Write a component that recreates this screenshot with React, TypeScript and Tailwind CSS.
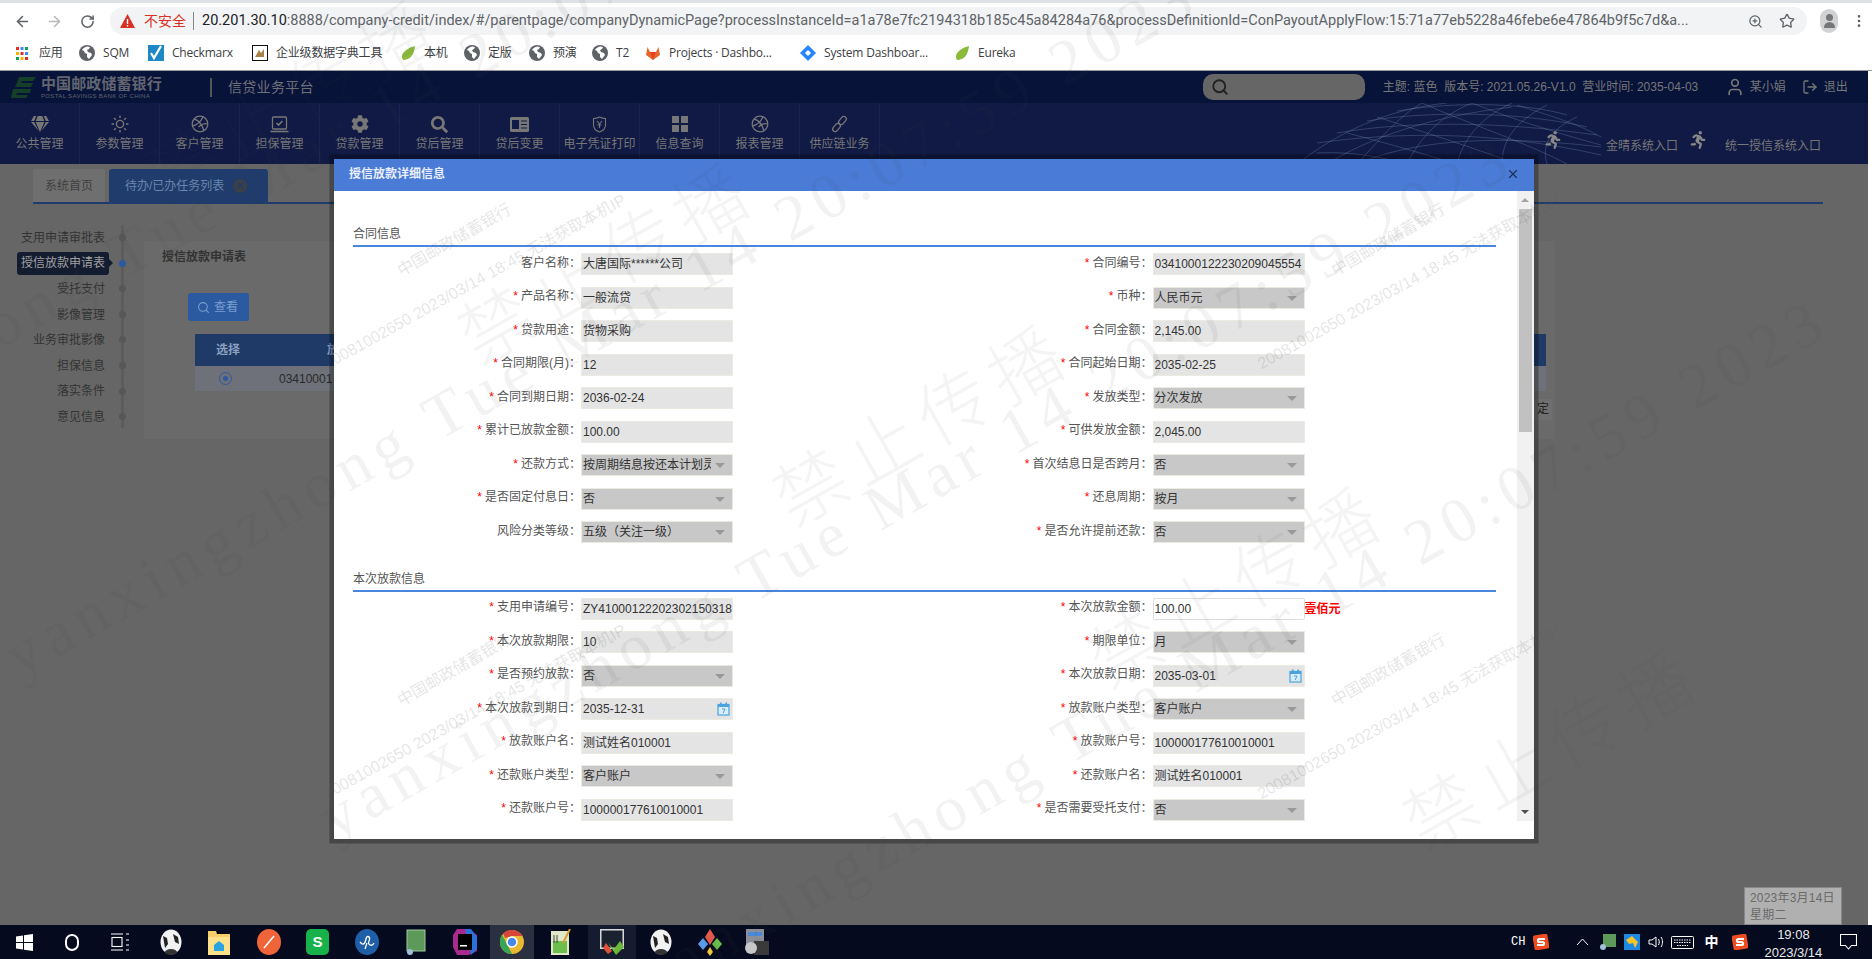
import React from "react";
import { ArrowLeft, ArrowRight, RotateCw, ZoomIn, Star, EllipsisVertical, Search, X, User, LogOut } from "lucide-react";
import { FaRunning, FaCog, FaSearch, FaGem } from "react-icons/fa";

type F = { l: string; v: string; s?: boolean; k?: "sel" | "date" | "edit"; t?: string };

const sec1L: F[] = [
  { l: "客户名称", v: "大唐国际******公司" },
  { l: "产品名称", v: "一般流贷", s: true },
  { l: "贷款用途", v: "货物采购", s: true },
  { l: "合同期限(月)", v: "12", s: true },
  { l: "合同到期日期", v: "2036-02-24", s: true },
  { l: "累计已放款金额", v: "100.00", s: true },
  { l: "还款方式", v: "按周期结息按还本计划灵活还款", s: true, k: "sel" },
  { l: "是否固定付息日", v: "否", s: true, k: "sel" },
  { l: "风险分类等级", v: "五级（关注一级）", k: "sel" },
];
const sec1R: F[] = [
  { l: "合同编号", v: "0341000122230209045554", s: true },
  { l: "币种", v: "人民币元", s: true, k: "sel" },
  { l: "合同金额", v: "2,145.00", s: true },
  { l: "合同起始日期", v: "2035-02-25", s: true },
  { l: "发放类型", v: "分次发放", s: true, k: "sel" },
  { l: "可供发放金额", v: "2,045.00", s: true },
  { l: "首次结息日是否跨月", v: "否", s: true, k: "sel" },
  { l: "还息周期", v: "按月", s: true, k: "sel" },
  { l: "是否允许提前还款", v: "否", s: true, k: "sel" },
];
const sec2L: F[] = [
  { l: "支用申请编号", v: "ZY41000122202302150318", s: true },
  { l: "本次放款期限", v: "10", s: true },
  { l: "是否预约放款", v: "否", s: true, k: "sel" },
  { l: "本次放款到期日", v: "2035-12-31", s: true, k: "date" },
  { l: "放款账户名", v: "测试姓名010001", s: true },
  { l: "还款账户类型", v: "客户账户", s: true, k: "sel" },
  { l: "还款账户号", v: "100000177610010001", s: true },
];
const sec2R: F[] = [
  { l: "本次放款金额", v: "100.00", s: true, k: "edit", t: "壹佰元" },
  { l: "期限单位", v: "月", s: true, k: "sel" },
  { l: "本次放款日期", v: "2035-03-01", s: true, k: "date" },
  { l: "放款账户类型", v: "客户账户", s: true, k: "sel" },
  { l: "放款账户号", v: "100000177610010001", s: true },
  { l: "还款账户名", v: "测试姓名010001", s: true },
  { l: "是否需要受托支付", v: "否", s: true, k: "sel" },
];

const Cal = () => (
  <svg width="13" height="14" viewBox="0 0 13 14" className="absolute right-[2px] top-[3px]">
    <rect x="1" y="2.5" width="11" height="10.5" fill="#d9ecfa" stroke="#4aa3e0" strokeWidth="1.2" />
    <rect x="1" y="2" width="11" height="3" fill="#4aa3e0" />
    <rect x="3" y="0.5" width="1.6" height="3" fill="#4aa3e0" />
    <rect x="8.4" y="0.5" width="1.6" height="3" fill="#4aa3e0" />
    <path d="M5 7h3L6.2 11" fill="none" stroke="#4aa3e0" strokeWidth="1" />
  </svg>
);

function Field({ f }: { f: F }) {
  const box =
    f.k === "sel"
      ? "bg-[#c8c8c8] border-[#ebebe4]"
      : f.k === "edit"
      ? "bg-white border-[#dddddd] rounded-[2px]"
      : "bg-[#e4e4e4] border-[#ebebe4]";
  return (
    <div className="flex items-center h-[22px] mb-[11.5px]">
      <div className="w-[228px] text-right text-[12px] leading-[18px] -mt-[3px] text-[#555] whitespace-nowrap">
        {f.s && <span className="text-[#ff0000] mr-[3px]">*</span>}
        {f.l}：
      </div>
      <div className={`relative w-[152px] h-[22px] border ${box} shrink-0 text-[12px] leading-[21px] pl-[1px] text-[#333] whitespace-nowrap overflow-hidden`}>
        <div className={f.k === "sel" ? "w-[128px] overflow-hidden" : "overflow-hidden"}>{f.v}</div>
        {f.k === "sel" && <div className="absolute right-[7px] top-[8px] w-0 h-0 border-l-[5px] border-r-[5px] border-t-[5px] border-l-transparent border-r-transparent border-t-[#999]" />}
        {f.k === "date" && <Cal />}
      </div>
      {f.t && <div className="text-[12px] font-bold text-[#ff0000] whitespace-nowrap">{f.t}</div>}
    </div>
  );
}

function Section({ title, left, right, cls }: { title: string; left: F[]; right: F[]; cls: string }) {
  return (
    <div className={cls}>
      <div className="h-[20px] text-[12px] leading-[18px] text-[#555] border-b-2 border-[#4a86e0] w-[1143px] box-content">{title}</div>
      <div className="grid grid-cols-2 w-[1143px] pt-[6px]">
        <div>{left.map((f) => <Field key={f.l} f={f} />)}</div>
        <div>{right.map((f) => <Field key={f.l} f={f} />)}</div>
      </div>
    </div>
  );
}

const I = "#777777";
const Ball = () => (
  <svg width="18" height="18" viewBox="0 0 18 18" fill="none" stroke={I} strokeWidth="1.3">
    <circle cx="9" cy="9" r="7.8" />
    <path d="M3 4c4 1 8 5 10 12M12 2C10 6 6 10 1.5 11M16.5 9c-3-1-6 0-9 3" />
  </svg>
);
const navItems: { t: string; i: React.ReactNode }[] = [
  { t: "公共管理", i: <FaGem size={18} color={I} /> },
  {
    t: "参数管理",
    i: (
      <svg width="18" height="18" viewBox="0 0 18 18" fill="none" stroke={I} strokeWidth="1.4">
        <circle cx="9" cy="9" r="3.6" />
        <path d="M9 .5v2.6M9 14.9v2.6M.5 9h2.6M14.9 9h2.6M3 3l1.8 1.8M13.2 13.2L15 15M3 15l1.8-1.8M13.2 4.8L15 3" />
      </svg>
    ),
  },
  { t: "客户管理", i: <Ball /> },
  {
    t: "担保管理",
    i: (
      <svg width="19" height="17" viewBox="0 0 19 17" fill="none" stroke={I} strokeWidth="1.3">
        <rect x="2.5" y="1" width="14" height="12" rx="1" />
        <path d="M6.5 7l2 2 4-4" strokeWidth="1.6" />
        <path d="M.5 15.5h18" strokeWidth="1.6" />
      </svg>
    ),
  },
  { t: "贷款管理", i: <FaCog size={18} color={I} /> },
  { t: "贷后管理", i: <FaSearch size={17} color={I} /> },
  {
    t: "贷后变更",
    i: (
      <svg width="19" height="15" viewBox="0 0 19 15">
        <rect width="19" height="15" rx="1.5" fill={I} />
        <rect x="2" y="3" width="7" height="9" fill="#101a44" />
        <path d="M11 4h6M11 7.5h6M11 11h6" stroke="#101a44" strokeWidth="1.2" />
      </svg>
    ),
  },
  {
    t: "电子凭证打印",
    i: (
      <svg width="15" height="17" viewBox="0 0 15 17" fill="none" stroke={I} strokeWidth="1.1">
        <path d="M7.500 1c2 1 4 1.500 6 1.500V9c0 3.500-3 6-6 7-3-1-6-3.500-6-7V2.500c2 0 4-.5 6-1.500z" />
        <path d="M5 5l2.500 3L10 5M7.500 8v4M5.500 9h4" />
      </svg>
    ),
  },
  {
    t: "信息查询",
    i: (
      <svg width="16" height="16" viewBox="0 0 16 16" fill={I}>
        <rect width="7" height="7" />
        <rect x="9" width="7" height="7" />
        <rect y="9" width="7" height="7" />
        <rect x="9" y="9" width="7" height="7" />
      </svg>
    ),
  },
  { t: "报表管理", i: <Ball /> },
  {
    t: "供应链业务",
    i: (
      <svg width="17" height="18" viewBox="0 0 17 18" fill="none" stroke={I} strokeWidth="1.3">
        <rect x="9" y="1" width="5" height="9" rx="2.500" transform="rotate(40 11.500 5.500)" />
        <rect x="3" y="8" width="5" height="9" rx="2.500" transform="rotate(40 5.500 12.500)" />
      </svg>
    ),
  },
];

const steps = ["支用申请审批表", "授信放款申请表", "受托支付", "影像管理", "业务审批影像", "担保信息", "落实条件", "意见信息"];

const mesh = [
  "M0 61C40 30 90 6 150 0", "M30 61C70 36 130 14 215 4", "M60 61C100 44 170 28 304 44", "M20 40C90 30 190 26 304 52",
  "M40 30C110 18 200 18 300 32", "M70 18C130 8 220 8 290 24", "M100 8C160 -2 230 0 270 12", "M60 61C80 40 100 14 125 0",
  "M110 61C120 40 140 14 175 0", "M160 61C165 40 180 16 215 0", "M205 61C205 40 215 20 250 2", "M250 61C245 44 250 28 280 14",
  "M125 0C170 20 230 40 270 61", "M175 0C215 16 260 30 304 42", "M80 14C130 30 180 46 220 61", "M50 30C90 40 130 52 160 61",
  "M220 2C250 12 280 20 304 34", "M20 50C60 48 90 56 110 61",
];

const big = [
  [-290, 526], [25, 688], [340, 850], [655, 1012],
];
const cjk = [
  [-150, 46], [165, 208], [480, 370], [795, 532], [1110, 694], [1425, 856],
];
const small = [
  [403, 279, 329, 372], [1337, 279, 1263, 372], [403, 709, 329, 802], [1337, 709, 1263, 802],
];

const Ball2 = () => (
  <svg width="16" height="16" viewBox="0 0 16 16" className="mr-[8px]">
    <circle cx="8" cy="8" r="8" fill="#5f6368" />
    <path d="M8 1.500C6 2 4 3 3 5l2 1 1 2 2 1v3l2 2 3-4-1-2-3-1-1-2 2-1 1-2z" fill="#fff" />
  </svg>
);
const Panda = () => (
  <svg width="22" height="26" viewBox="0 0 22 26">
    <ellipse cx="11" cy="13" rx="10.500" ry="12.500" fill="#f2f2f2" />
    <path d="M3 7l4 2 1 6-3 4zM13 5l5 3 1 7-4-2z" fill="#222" />
    <ellipse cx="11" cy="23" rx="6" ry="3" fill="#333" />
  </svg>
);
const SogouS = ({ className }: { className: string }) => (
  <svg width="16" height="16" viewBox="0 0 16 16" className={className}>
    <rect x="0.500" y="0.500" width="15" height="15" rx="2" fill="#ef4b23" transform="rotate(-10 8 8)" />
    <path d="M12 5H6.500a1.500 1.500 0 0 0 0 3h3a1.500 1.500 0 0 1 0 3H4" fill="none" stroke="#fff" strokeWidth="2.200" />
  </svg>
);

export default function App() {
  return (
    <div className="relative w-[1872px] h-[959px] overflow-hidden flex flex-col bg-white font-['Liberation_Sans','Noto_Sans_CJK_SC',sans-serif]">
      {/* browser chrome */}
      <div className="h-[3px] bg-[#dee1e6] shrink-0" />
      <div className="h-[33px] pt-[4px] pb-[1px] flex items-center shrink-0">
        <ArrowLeft size={17} color="#5f6368" className="ml-[14px]" strokeWidth={2.200} />
        <ArrowRight size={17} color="#b6b8bb" className="ml-[15px]" strokeWidth={2.200} />
        <RotateCw size={15} color="#5f6368" className="ml-[17px]" strokeWidth={2.400} />
        <div className="ml-[15px] w-[1697px] h-[28px] rounded-[14px] bg-[#f1f3f4] flex items-center pl-[10px] pr-[12px]">
          <svg width="15" height="14" viewBox="0 0 15 14" className="shrink-0">
            <path d="M7.500 0L15 14H0z" fill="#d93025" />
            <path d="M6.800 5h1.400v5H6.800zM6.800 11h1.400v1.400H6.800z" fill="#fff" />
          </svg>
          <span className="ml-[9px] text-[14px] text-[#d93025] whitespace-nowrap">不安全</span>
          <span className="ml-[7px] w-px h-[18px] bg-[#80868b]" />
          <div className="ml-[8px] w-[1534px] text-[14.5px] whitespace-nowrap overflow-hidden text-[#5f6368] font-['Roboto',sans-serif]">
            <span className="text-[#202124]">20.201.30.10</span>:8888/company-credit/index/#/parentpage/companyDynamicPage?processInstanceId=a1a78e7fc2194318b185c45a84284a76&amp;processDefinitionId=ConPayoutApplyFlow:15:71a77eb5228a46febe6e47864b9f5c7d&amp;a...
          </div>
          <ZoomIn size={15} color="#5f6368" className="ml-[15px] shrink-0" />
          <Star size={16} color="#5f6368" className="ml-[16px] shrink-0" />
        </div>
        <div className="ml-[13px] w-[18px] h-[24px] rounded-full bg-[#d0d2d4] flex flex-col items-center justify-center shrink-0">
          <div className="w-[7px] h-[7px] rounded-full bg-[#777]" />
          <div className="w-[11px] h-[6px] rounded-t-full bg-[#777] mt-[1px]" />
        </div>
        <EllipsisVertical size={16} color="#5f6368" className="ml-[13px]" />
      </div>
      <div className="h-[35px] border-b border-[#9a9a9a] flex items-center text-[12px] text-[#3c4043] shrink-0 pl-[14px] font-['Open_Sans','Noto_Sans_CJK_SC',sans-serif] tracking-[-0.2px]">
        <div className="flex items-center w-[65px]">
          <svg width="16" height="16" viewBox="0 0 16 16" className="mr-[9px]">
            <g fill="#d93025"><rect x="2" y="2" width="3" height="3" /><rect x="2" y="7" width="3" height="3" fill="#f4b400" /><rect x="2" y="12" width="3" height="3" fill="#0f9d58" /></g>
            <g><rect x="6.500" y="2" width="3" height="3" fill="#4285f4" /><rect x="6.500" y="7" width="3" height="3" fill="#d93025" /><rect x="6.500" y="12" width="3" height="3" fill="#f4b400" /></g>
            <g><rect x="11" y="2" width="3" height="3" fill="#0f9d58" /><rect x="11" y="7" width="3" height="3" fill="#4285f4" /><rect x="11" y="12" width="3" height="3" fill="#d93025" /></g>
          </svg>
          应用
        </div>
        <div className="flex items-center w-[69px]"><Ball2 />SQM</div>
        <div className="flex items-center w-[104px]">
          <svg width="16" height="16" viewBox="0 0 16 16" className="mr-[8px]"><rect width="16" height="16" fill="#1e88c7" /><path d="M3 8l3 5 7-12" fill="none" stroke="#fff" strokeWidth="2.200" /></svg>
          Checkmarx
        </div>
        <div className="flex items-center w-[148px]">
          <svg width="16" height="16" viewBox="0 0 16 16" className="mr-[8px]"><rect x="0.500" y="0.500" width="15" height="15" fill="#fff" stroke="#111" /><path d="M3 12l4-7 2 3 3-4v8z" fill="#a9824a" /></svg>
          企业级数据字典工具
        </div>
        <div className="flex items-center w-[64px]">
          <svg width="16" height="16" viewBox="0 0 16 16" className="mr-[8px]"><path d="M15 1C14 10 10 15 3 15 0 11 3 4 15 1z" fill="#8cbb3c" /></svg>
          本机
        </div>
        <div className="flex items-center w-[65px]"><Ball2 />定版</div>
        <div className="flex items-center w-[63px]"><Ball2 />预演</div>
        <div className="flex items-center w-[53px]"><Ball2 />T2</div>
        <div className="flex items-center w-[155px]">
          <svg width="16" height="16" viewBox="0 0 16 16" className="mr-[8px]"><path d="M8 15L1 10l1.500-8L5 7h6l2.500-5L15 10z" fill="#e8662a" /><path d="M8 15L5 7h6z" fill="#e24329" /></svg>
          <span className="w-[113px] whitespace-nowrap overflow-hidden">Projects · Dashbo...</span>
        </div>
        <div className="flex items-center w-[154px]">
          <svg width="16" height="16" viewBox="0 0 16 16" className="mr-[8px]"><path d="M8 0l8 8-8 8-8-8z" fill="#2684ff" /><path d="M8 5l3 3-3 3-3-3z" fill="#fff" /></svg>
          <span className="w-[113px] whitespace-nowrap overflow-hidden">System Dashboar...</span>
        </div>
        <div className="flex items-center">
          <svg width="16" height="16" viewBox="0 0 16 16" className="mr-[8px]"><path d="M15 1C14 10 10 15 3 15 0 11 3 4 15 1z" fill="#8cbb3c" /></svg>
          Eureka
        </div>
      </div>

      {/* page */}
      <div className="flex-1 w-[1868px] flex flex-col min-h-0">
        <div className="h-[32px] bg-[#08133a] flex items-center shrink-0 text-[#777]">
          <svg width="26" height="24" viewBox="0 0 26 24" className="ml-[11px]">
            <path d="M8 2h17l-3 4H11l-1 2h12l-2 4H4l2-4h0zM2 14h18l-1 4H6l-1 2h12l-2 3H0z" fill="#163f2a" />
          </svg>
          <div className="ml-[4px] w-[119px]">
            <div className="text-[15px] leading-[17px] font-bold tracking-[0.1px] text-[#62656f] whitespace-nowrap">中国邮政储蓄银行</div>
            <div className="text-[6px] leading-[8px] text-[#62656f] tracking-[0.35px] whitespace-nowrap">POSTAL SAVINGS BANK OF CHINA</div>
          </div>
          <div className="ml-[50px] w-[2px] h-[19px] bg-[#555]" />
          <div className="ml-[16px] text-[14px] tracking-[0.3px] text-[#6e7078] whitespace-nowrap">信贷业务平台</div>
          <div className="ml-[889px] w-[162px] h-[26px] rounded-[10px] bg-[#666] flex items-center pl-[8px]">
            <Search size={18} color="#222" strokeWidth={2.500} />
          </div>
          <div className="ml-[18px] text-[12px] text-[#777] whitespace-nowrap w-[343px]">主题: 蓝色&nbsp; 版本号: 2021.05.26-V1.0&nbsp; 营业时间: 2035-04-03</div>
          <User size={20} color="#777" className="-ml-[1px]" />
          <span className="ml-[5px] text-[12px] w-[42px]">某小娟</span>
          <LogOut size={16} color="#777" className="ml-[10px]" />
          <span className="ml-[6px] text-[12px]">退出</span>
        </div>
        <div className="relative h-[61px] bg-[#101a44] flex shrink-0 overflow-hidden text-[#777]">
          <svg width="304" height="61" viewBox="0 0 304 61" fill="none" stroke="#7f90b8" strokeOpacity="0.4" strokeWidth="0.800" className="absolute left-[1297px] top-0">
            {mesh.map((d) => <path key={d} d={d} />)}
          </svg>
          {navItems.map((n) => (
            <div key={n.t} className="w-[80px] shrink-0 border-r border-[#1a2450] flex flex-col items-center">
              <div className="h-[18px] mt-[12px] flex items-center">{n.i}</div>
              <div className="mt-[3px] text-[12px] leading-[16px] whitespace-nowrap">{n.t}</div>
            </div>
          ))}
          <div className="relative flex items-start ml-[664px] pt-[26px] text-[12px] whitespace-nowrap">
            <FaRunning size={18} color="#888" className="mr-[44px] mt-[2px]" />
            <span className="mt-[8px]">金晴系统入口</span>
            <FaRunning size={18} color="#888" className="ml-[11px] mr-[18px] mt-[2px]" />
            <span className="mt-[8px]">统一授信系统入口</span>
          </div>
        </div>
        <div className="flex-1 bg-[#666] min-h-0 flex flex-col">
          <div className="flex items-end h-[40px] ml-[33px] mr-[45px] border-b-2 border-[#1f3c6c] shrink-0">
            <div className="w-[72px] h-[33px] bg-[#6f6f6f] rounded-t-[3px] text-[12px] text-[#3f3f3f] flex items-center justify-center">系统首页</div>
            <div className="ml-[4px] w-[159px] h-[33px] bg-[#1f3c6c] rounded-t-[3px] text-[12px] text-[#6a86ad] flex items-center pl-[16px] whitespace-nowrap">
              待办/已办任务列表
              <span className="ml-[9px] w-[14px] h-[14px] rounded-full bg-[#3a3f4a] flex items-center justify-center"><X size={9} color="#1f3c6c" strokeWidth={3} /></span>
            </div>
          </div>
          <div className="flex mt-[21px] h-[214px]">
            <div className="relative w-[144px] shrink-0 flex flex-col">
              <div className="absolute left-[121px] top-0 w-[3px] h-[203px] bg-[#5c5c5c]" />
              {steps.map((s, i) => (
                <div key={s} className="relative h-[25.6px] flex items-center justify-end pr-[39px] text-[12px] text-[#333] whitespace-nowrap">
                  {i === 1 ? (
                    <span className="relative -mr-[4px] h-[23px] w-[92px] rounded-[3px] bg-[#141c30] text-[#a0a0a0] flex items-center justify-center">
                      {s}
                      <span className="absolute -right-[4px] top-[7px] w-0 h-0 border-y-[4px] border-l-[4px] border-y-transparent border-l-[#141c30]" />
                    </span>
                  ) : (
                    s
                  )}
                  <span className={i === 1 ? "absolute left-[119px] top-[9px] w-[7px] h-[7px] rounded-full bg-[#2a5aa0]" : "absolute left-[119px] top-[9px] w-[7px] h-[7px] rounded-full bg-[#575757]"} />
                </div>
              ))}
            </div>
            <div className="w-[1411px] h-[198px] mt-[16px] bg-[#6a6a6a] pt-[7px] relative">
              <div className="ml-[18px] text-[12px] font-bold text-[#333]">授信放款申请表</div>
              <div className="ml-[44px] mt-[27px] w-[61px] h-[28px] rounded-[3px] bg-[#2b5aa0] flex items-center pl-[9px] gap-[4px] text-[12px] text-[#7a9ecf]">
                <Search size={13} color="#7a9ecf" />
                查看
              </div>
              <div className="ml-[51px] mt-[13px] w-[1351px] h-[32px] bg-[#1f3a66] flex items-center text-[12px] font-bold text-[#8aa0c0] pl-[21px]">
                选择
                <span className="ml-[87px]">放款</span>
              </div>
              <div className="ml-[51px] w-[1351px] h-[25px] bg-[#6e7179] flex items-center text-[12px] text-[#2a2a2a] pl-[24px]">
                <span className="w-[13px] h-[13px] rounded-full border border-[#2b5aa0] flex items-center justify-center"><span className="w-[5px] h-[5px] rounded-full bg-[#2b5aa0]" /></span>
                <span className="ml-[47px]">03410001</span>
              </div>
              <div className="absolute right-[3px] top-[158px] w-[18px] h-[21px] rounded-[2px] bg-[#6f6f6f] text-[12px] leading-[21px] text-[#222] text-center">定</div>
            </div>
          </div>
        </div>
        <div className="h-[34px] bg-[#050a1e] w-[1872px] shrink-0 flex items-center overflow-hidden relative">
          <svg width="17" height="17" viewBox="0 0 17 17" fill="#fff" className="ml-[16px]">
            <path d="M0 2.500L7 1.500V8H0zM8 1.300L17 0v8H8zM0 9h7v6.500L0 14.500zM8 9h9v8l-9-1.300z" />
          </svg>
          <span className="ml-[32px] w-[14px] h-[17px] rounded-full border-2 border-white" />
          <svg width="18" height="18" viewBox="0 0 18 18" fill="none" stroke="#fff" strokeWidth="1.100" className="ml-[32px]">
            <path d="M0 1h12M0 17h12" /><rect x="1" y="4.500" width="10" height="9" /><path d="M15 1h3M15 7h3M15 12h3M15 17h3" />
          </svg>
          <span className="ml-[31px]"><Panda /></span>
          <svg width="22" height="26" viewBox="0 0 22 26" className="ml-[26px]">
            <path d="M0 2h8l1 3h13v21H0z" fill="#f5cf6a" /><path d="M0 8h22v18H0z" fill="#fde08a" /><path d="M6 22v-6l5-4 5 4v6z" fill="#2aa3e0" />
          </svg>
          <svg width="24" height="26" viewBox="0 0 24 26" className="ml-[27px]">
            <ellipse cx="12" cy="13" rx="12" ry="13" fill="#f0643a" /><path d="M7 19L17 7" stroke="#fff" strokeWidth="1.500" />
          </svg>
          <span className="ml-[25px] w-[23px] h-[26px] rounded-[5px] bg-[#17b34a] text-white text-[15px] leading-[26px] text-center font-bold">S</span>
          <svg width="24" height="26" viewBox="0 0 24 26" className="ml-[26px]">
            <ellipse cx="12" cy="13" rx="12" ry="13" fill="#1f5fa8" /><path d="M5 13c3 4 5 2 6-3s5-2 3 2 3 6 5 2M12 14l-2 6" fill="none" stroke="#fff" strokeWidth="1.300" />
          </svg>
          <svg width="20" height="26" viewBox="0 0 20 26" className="ml-[27px]">
            <rect x="1" y="1" width="18" height="21" fill="#5d9a5a" stroke="#a4c8a0" /><circle cx="4" cy="23" r="3" fill="#9fc0d8" />
          </svg>
          <svg width="24" height="26" viewBox="0 0 24 26" className="ml-[27px]">
            <path d="M4 0h12l8 6v16l-8 4H4L0 18V6z" fill="#a82a8f" /><path d="M12 0h6l6 8v12l-6 6z" fill="#2a72d8" /><rect x="5" y="5" width="14" height="16" fill="#000" /><rect x="7" y="16" width="7" height="1.500" fill="#fff" />
          </svg>
          <div className="ml-[13px] w-[44px] h-[34px] bg-[#2a3040] flex items-center justify-center">
            <svg width="24" height="24" viewBox="0 0 24 24">
              <circle cx="12" cy="12" r="12" fill="#e8b931" /><path d="M12 0a12 12 0 0 1 10.400 6H12L5 8 3 3.500A12 12 0 0 1 12 0z" fill="#d8463a" /><path d="M2 5l5 9 5 10A12 12 0 0 1 2 5z" fill="#3aa655" /><circle cx="12" cy="12" r="5" fill="#4a88e8" stroke="#fff" strokeWidth="1.500" />
            </svg>
          </div>
          <svg width="22" height="26" viewBox="0 0 22 26" className="ml-[16px]">
            <rect x="1" y="2" width="18" height="24" fill="#dfe8c8" /><rect x="3" y="12" width="14" height="12" fill="#6bbf4a" /><path d="M4 6v8M7 6v8" stroke="#444" /><path d="M20 0l-7 14" stroke="#d6a030" strokeWidth="2" />
          </svg>
          <div className="ml-[16px] w-[48px] h-[34px] bg-[#161c30] flex items-center justify-center">
            <svg width="24" height="26" viewBox="0 0 24 26">
              <rect width="24" height="20" fill="#d8d8d8" /><rect x="1.500" y="1.500" width="21" height="17" fill="#1a2230" /><path d="M8 14l6 6 6-8 4 6-8 8z" fill="#6bb83a" /><path d="M6 14l6 8-4 3-5-6z" fill="#e2503a" />
            </svg>
          </div>
          <span className="ml-[14px]"><Panda /></span>
          <svg width="24" height="27" viewBox="0 0 24 27" className="ml-[26px]">
            <path d="M12 0l5 8-5 8-5-8z" fill="#e85a4f" /><path d="M5 9l5 6-5 6-5-6z" fill="#5a9be8" /><path d="M19 9l5 6-5 6-5-6z" fill="#6abf4a" /><path d="M12 18l3 5-3 4-3-4z" fill="#f0c53a" />
          </svg>
          <svg width="24" height="26" viewBox="0 0 24 26" className="ml-[23px]">
            <rect x="1" y="0" width="18" height="20" fill="#8a8f98" /><rect x="3" y="3" width="14" height="4" fill="#4a88d8" /><rect x="9" y="12" width="15" height="14" fill="#3a3a3a" /><circle cx="6" cy="19" r="6" fill="#c8c8c8" />
          </svg>
          {/* tray */}
          <span className="ml-[742px] text-[12px] text-white font-['Liberation_Mono',monospace]">CH</span>
          <SogouS className="ml-[8px]" />
          <svg width="13" height="8" viewBox="0 0 13 8" fill="none" stroke="#fff" className="ml-[27px]"><path d="M1 7l5.500-6L12 7" /></svg>
          <svg width="16" height="16" viewBox="0 0 16 16" className="ml-[11px]"><rect x="3" y="0" width="13" height="13" fill="#5d9a5a" /><circle cx="3" cy="13" r="3" fill="#9fc0d8" /></svg>
          <svg width="16" height="16" viewBox="0 0 16 16" className="ml-[8px]"><rect width="16" height="16" fill="#1e88e5" /><path d="M2 6l6-4 6 6-3 6-2-5-4 1z" fill="#f6c32a" /></svg>
          <svg width="16" height="14" viewBox="0 0 16 14" fill="none" stroke="#fff" className="ml-[8px]"><path d="M1 5h3l4-3v10l-4-3H1zM10.500 4c1 2 1 4 0 6M13 2c2 3 2 7 0 10" /></svg>
          <svg width="23" height="13" viewBox="0 0 23 13" fill="none" stroke="#fff" className="ml-[7px]"><rect x="0.500" y="0.500" width="22" height="12" rx="1" /><path d="M3 4h17M3 6.500h17M6 9.500h11" strokeDasharray="1.500 1" /></svg>
          <span className="ml-[10px] text-[14px] font-bold text-white">中</span>
          <SogouS className="ml-[14px]" />
          <div className="ml-[11px] w-[68px] flex flex-col items-center text-[13px] leading-[18px] text-[#e8e8e8] pt-[3px] whitespace-nowrap">
            <div>19:08</div>
            <div>2023/3/14</div>
          </div>
          <svg width="17" height="16" viewBox="0 0 17 16" fill="none" stroke="#fff" strokeWidth="1.100" className="ml-[13px]"><path d="M.5.5h16v11h-5l-3 3.500-3-3.500h-5z" /></svg>
        </div>
      </div>
      <div className="absolute left-[1744px] top-[887px] w-[98px] h-[38px] bg-[#b0b0b0] border border-[#888] text-[12px] leading-[17px] text-[#6a6a6a] pl-[5px] pt-[2px] whitespace-nowrap tracking-[0.2px]">
        <div>2023年3月14日</div>
        <div>星期二</div>
      </div>

      {/* modal */}
      <div className="absolute left-[334px] top-[159px] w-[1200px] h-[680px] bg-white shadow-[0_0_0_4.500px_rgba(0,0,0,0.3)] flex flex-col">
        <div className="h-[32px] bg-[#4a7bd6] flex items-center justify-between pl-[15px] pr-[14px] pb-[3px] text-[12px] font-bold text-[#e8eefa] shrink-0">
          授信放款详细信息
          <X size={14} color="#1f2f55" />
        </div>
        <div className="flex h-[630px]">
          <div className="w-[1183px] pl-[19px] overflow-hidden">
            <Section title="合同信息" left={sec1L} right={sec1R} cls="pt-[34px]" />
            <Section title="本次放款信息" left={sec2L} right={sec2R} cls="mt-[15px]" />
          </div>
          <div className="w-[17px] bg-[#f1f1f1] relative">
            <div className="absolute left-[4px] top-[7px] w-0 h-0 border-x-[4px] border-b-[4px] border-x-transparent border-b-[#a3a3a3]" />
            <div className="absolute left-[2px] top-[18px] w-[13px] h-[223px] bg-[#c1c1c1]" />
            <div className="absolute left-[4px] bottom-[7px] w-0 h-0 border-x-[4px] border-t-[4px] border-x-transparent border-t-[#505050]" />
          </div>
        </div>
      </div>

      {/* watermarks */}
      <div className="absolute inset-0 pointer-events-none overflow-hidden">
        {big.map(([x, y]) => (
          <div key={x} className="absolute origin-bottom-left -rotate-[29.5deg] whitespace-nowrap text-[64px] leading-[64px] tracking-[8px] text-[rgba(70,70,70,0.07)] font-['Liberation_Serif',serif]" style={{ left: x, top: y - 64 }}>
            yanxingzhong Tue Mar 14 20:07:59 2023
          </div>
        ))}
        {cjk.map(([x, y]) => (
          <div key={x} className="absolute origin-bottom-left -rotate-[29.5deg] whitespace-nowrap text-[72px] leading-[72px] tracking-[10px] font-light text-[rgba(70,70,70,0.06)] font-['Noto_Sans_CJK_SC',serif]" style={{ left: x, top: y - 72 }}>
            禁止传播
          </div>
        ))}
        {small.map(([x, y, x2, y2]) => (
          <React.Fragment key={`${x}-${y}`}>
            <div className="absolute origin-bottom-left -rotate-[30deg] whitespace-nowrap text-[16px] leading-[16px] text-[rgba(90,90,90,0.17)]" style={{ left: x, top: y - 16 }}>中国邮政储蓄银行</div>
            <div className="absolute origin-bottom-left -rotate-[29deg] whitespace-nowrap text-[16px] leading-[16px] text-[rgba(90,90,90,0.17)]" style={{ left: x2, top: y2 - 16 }}>20081002650 2023/03/14 18:45 无法获取本机IP</div>
          </React.Fragment>
        ))}
      </div>
    </div>
  );
}
